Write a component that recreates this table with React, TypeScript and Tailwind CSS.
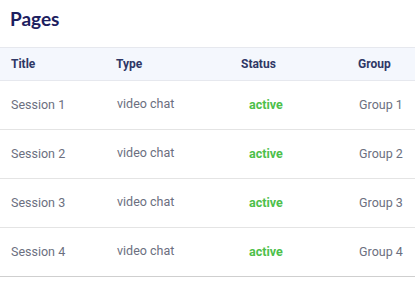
const rows = [
  { title: "Session 1", type: "video chat", status: "active", group: "Group 1" },
  { title: "Session 2", type: "video chat", status: "active", group: "Group 2" },
  { title: "Session 3", type: "video chat", status: "active", group: "Group 3" },
  { title: "Session 4", type: "video chat", status: "active", group: "Group 4" }
]

const App = () => {
  return (
    <main className="w-[415px] h-[284px] bg-white overflow-hidden font-['Roboto',sans-serif]">
      <h1 className="h-[47px] pl-[10px] pt-[5px] text-[19px] font-bold text-[#1c2060] font-['Lato',sans-serif] leading-[28px]">
        Pages
      </h1>

      <section className="grid grid-cols-[105px_125px_117px_1fr] items-center pl-[11px] h-[34px] bg-[#f4f7fd] border-y border-[#e6e8ee] text-[12px] font-bold text-[#2f3766]">
        <div className="-mt-[1px]">Title</div>
        <div className="-mt-[1px]">Type</div>
        <div className="-mt-[1px]">Status</div>
        <div className="-mt-[1px]">Group</div>
      </section>

      <section className="flex flex-col">
        {rows.map((item) => (
          <article
            key={item.title}
            className="grid grid-cols-[105px_125px_117px_1fr] items-center pl-[11px] h-[49px] border-b border-[#e4e4e4] last:border-[#cfcfcf] text-[12.5px] text-[#6b6f80]"
          >
            <div>{item.title}</div>
            <div className="-mt-[2px] pl-[1px]">{item.type}</div>
            <div className="pl-[8px] font-bold text-[#4cc04a]">{item.status}</div>
            <div className="pl-[1px]">{item.group}</div>
          </article>
        ))}
      </section>
    </main>
  )
}

export default App
